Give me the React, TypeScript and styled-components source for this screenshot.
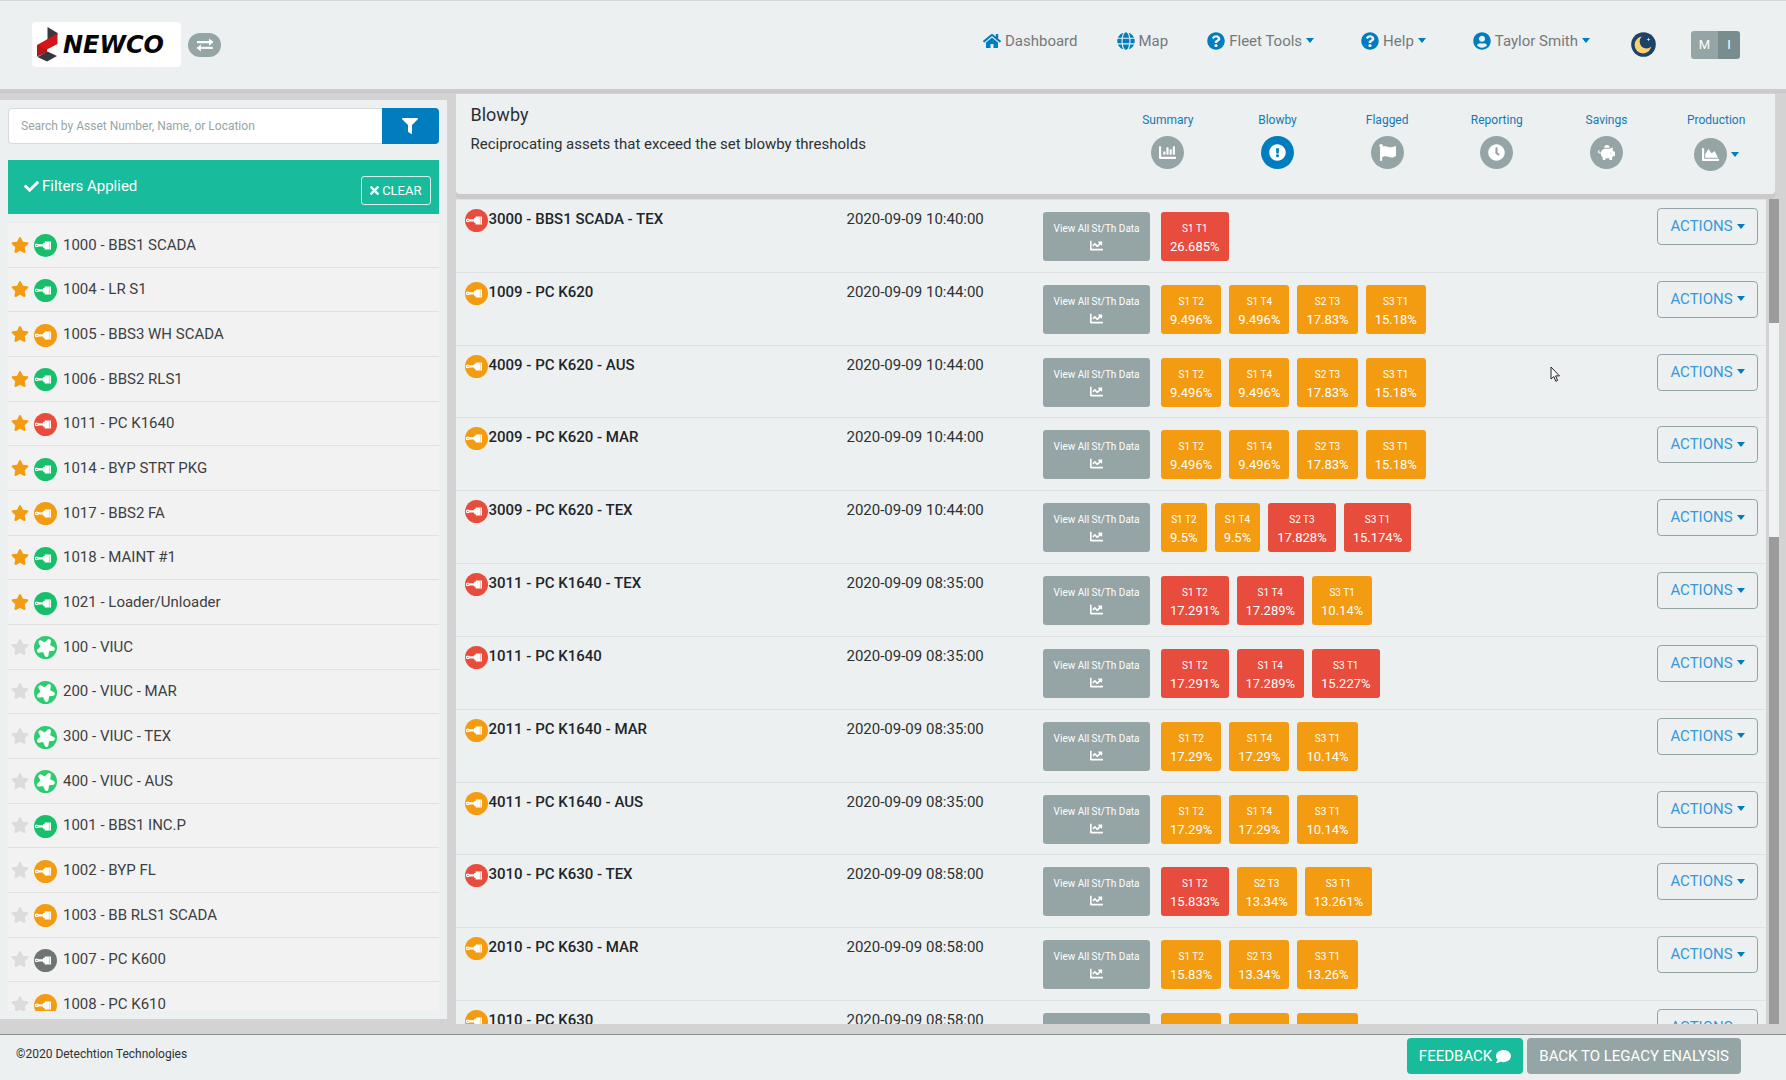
import React from "react";
import styled, { createGlobalStyle } from "styled-components";
import {
  FaHome, FaGlobe, FaQuestionCircle, FaUserCircle, FaFilter, FaCheck, FaTimes, FaStar,
  FaChartBar, FaExclamationCircle, FaFlag, FaClock, FaPiggyBank, FaChartArea, FaChartLine,
  FaComment,
} from "react-icons/fa";

const color = {
  surface: "#ecf0f1",
  gutter: "#d3d3d3",
  shade: "#cbc9ca",
  blue: "#007dbf",
  grey: "#95a5a6",
  teal: "#18bc9c",
  green: "#18bf6b",
  orange: "#f39c12",
  red: "#e74c3c",
  offline: "#6f7475",
};

const GlobalStyle = createGlobalStyle`
  *, *::before, *::after { box-sizing: border-box; }
  body {
    margin: 0;
    background: ${color.gutter};
    color: #2c3033;
    font-family: Roboto, "Liberation Sans", sans-serif;
    font-size: 15px;
    line-height: 20px;
  }
  button, input { font: inherit; }
  button { cursor: pointer; }
  a { text-decoration: none; color: inherit; }
`;

const Page = styled.div`
  position: relative;
  display: flex;
  flex-direction: column;
  height: 100vh;
  overflow: hidden;
`;

const TopBar = styled.header`
  display: flex;
  align-items: center;
  height: 89px;
  flex: none;
  padding: 0 46px 1px 32px;
  border-top: 1px solid #d5d9da;
  background: ${color.surface};
  box-shadow: 0 4px 1px ${color.shade};
`;

const Brand = styled.a`
  display: flex;
  align-items: center;
  gap: 5px;
  width: 149px;
  height: 45px;
  padding-left: 5px;
  border-radius: 4px;
  background: #fff;
  color: #050505;
  font: italic bold 24px "DejaVu Sans", sans-serif;
  svg { flex: none; }
`;

const SwapButton = styled.button`
  display: flex;
  align-items: center;
  justify-content: center;
  width: 33px;
  height: 24px;
  margin-left: 7px;
  padding: 0;
  border: 0;
  border-radius: 12px;
  background: ${color.grey};
  color: #fff;
`;

const Nav = styled.nav`
  display: flex;
  align-items: center;
  gap: 47px;
  height: 28px;
  margin: 0 41px 8px auto;
`;

const NavLink = styled.a<{ $trim?: boolean }>`
  display: flex;
  align-items: center;
  gap: 4px;
  margin-right: ${(p) => (p.$trim ? "-8px" : "0")};
  color: #76797b;
  svg { color: ${color.blue}; font-size: 18px; }
`;

const Caret = styled.span`
  width: 0;
  height: 0;
  border-top: 5px solid ${color.blue};
  border-left: 4px solid transparent;
  border-right: 4px solid transparent;
`;

const NightButton = styled.button`
  display: flex;
  padding: 0;
  border: 0;
  background: none;
`;

const UnitToggle = styled.div`
  display: flex;
  margin-left: 35px;
  border-radius: 3px;
  overflow: hidden;
`;

const UnitButton = styled.button<{ $active?: boolean }>`
  width: ${(p) => (p.$active ? "22px" : "27px")};
  height: 28px;
  padding: 0;
  border: 0;
  background: ${(p) => (p.$active ? "#798d8f" : color.grey)};
  color: #fff;
  font-size: 13px;
`;

const Body = styled.div`
  display: flex;
  flex: 1;
  min-height: 0;
  gap: 9px;
  padding: 5px 0 10px;
`;

const Sidebar = styled.aside`
  display: flex;
  flex-direction: column;
  width: 25%;
  min-width: 320px;
  margin: 6px 0 5px;
  padding: 8px 8px 8px 8px;
  background: ${color.surface};
`;

const SearchRow = styled.form`
  display: flex;
  height: 36px;
  margin-bottom: 16px;
  flex: none;
`;

const SearchInput = styled.input`
  flex: 1;
  min-width: 0;
  padding: 0 12px;
  border: 1px solid #d5dadd;
  border-right: 0;
  border-radius: 4px 0 0 4px;
  background: #fff;
  font-size: 12px;
  &::placeholder { color: #95a5a6; opacity: 1; }
`;

const FilterButton = styled.button`
  display: flex;
  align-items: center;
  justify-content: center;
  width: 57px;
  padding: 0;
  border: 0;
  border-radius: 0 4px 4px 0;
  background: ${color.blue};
  color: #fff;
  font-size: 16px;
`;

const FilterBanner = styled.div`
  display: flex;
  justify-content: space-between;
  align-items: flex-start;
  flex: none;
  height: 54px;
  margin-bottom: 8px;
  padding: 16px 8px 0 16px;
  background: ${color.teal};
  color: #fff;
`;

const BannerLabel = styled.span`
  display: flex;
  align-items: center;
  gap: 3px;
`;

const ClearButton = styled.button`
  display: flex;
  align-items: center;
  gap: 3px;
  height: 29px;
  padding: 0 8px;
  border: 1px solid #d9efe9;
  border-radius: 3px;
  background: none;
  color: #fff;
  font-size: 13px;
  svg { width: 9px; height: 13px; }
`;

const ListViewport = styled.div`
  flex: 1;
  min-height: 0;
  overflow: hidden;
`;

const AssetList = styled.ul`
  display: grid;
  grid-auto-rows: 1fr;
  height: 805px;
  margin: 0;
  padding: 0;
  border-top: 1px solid #e8eaeb;
  list-style: none;
  background: #f2f2f2;
`;

const AssetItem = styled.li`
  display: flex;
  align-items: center;
  padding: 0 3px;
  border-bottom: 1px solid #e2e2e2;
  color: #3d4042;
`;

const StarButton = styled.button<{ $on: boolean }>`
  display: flex;
  padding: 0;
  margin-right: 5px;
  border: 0;
  background: none;
  color: ${(p) => (p.$on ? color.orange : "#dcdcdc")};
  font-size: 18px;
`;

const AssetLink = styled.a`
  display: flex;
  align-items: center;
  gap: 6px;
  svg { flex: none; margin-top: 2px; }
`;

const Main = styled.main`
  display: flex;
  flex-direction: column;
  flex: 1;
  min-width: 0;
  margin-right: 7px;
`;

const PanelHead = styled.section`
  display: flex;
  justify-content: space-between;
  flex: none;
  height: 100px;
  margin-right: 4px;
  padding: 0 4px 0 15px;
  border-radius: 0 0 4px 4px;
  background: ${color.surface};
  box-shadow: 0 5px 0 ${color.shade};
`;

const PanelTitle = styled.h1`
  margin: 11px 0 9px;
  font-size: 18px;
  font-weight: 400;
`;

const PanelText = styled.p`
  margin: 0;
`;

const Tabs = styled.nav`
  display: grid;
  grid-template-columns: repeat(6, 1fr);
  width: 658px;
  flex: none;
`;

const Tab = styled.a`
  display: flex;
  flex-direction: column;
  align-items: center;
  gap: 6px;
  padding-top: 16px;
  color: #1678b4;
  font-size: 12px;
`;

const TabIcon = styled.span<{ $active?: boolean }>`
  display: flex;
  align-items: center;
  justify-content: center;
  width: 33px;
  height: 33px;
  border-radius: 50%;
  background: ${(p) => (p.$active ? color.blue : color.grey)};
  color: #fff;
  font-size: 17px;
`;

const TabIconRow = styled.span`
  display: flex;
  align-items: center;
  gap: 4px;
  margin-top: 2px;
`;

const ListArea = styled.section`
  display: flex;
  flex: 1;
  min-height: 0;
  margin-top: 5px;
  gap: 3px;
`;

const TableViewport = styled.div`
  flex: 1;
  min-width: 0;
  overflow: hidden;
  background: ${color.surface};
`;

const Table = styled.table`
  width: 100%;
  height: 875px;
  table-layout: fixed;
  border-collapse: separate;
  border-spacing: 0;
  border-top: 1px solid #dee2e4;
`;

const Col = styled.col<{ $width?: string }>`
  width: ${(p) => p.$width ?? "auto"};
`;

const Cell = styled.td<{ $top: number; $left?: number }>`
  padding: ${(p) => p.$top}px 0 0 ${(p) => p.$left ?? 0}px;
  border-bottom: 1px solid #dee2e4;
  vertical-align: top;
`;

const AssetName = styled.a`
  display: flex;
  align-items: flex-start;
  gap: 1px;
  color: #212529;
  font-weight: 500;
`;

const Readings = styled.div`
  display: flex;
  gap: 8px;
`;

const DataButton = styled.button`
  display: flex;
  flex-direction: column;
  align-items: center;
  width: 107px;
  height: 49px;
  margin-right: 3px;
  padding: 8px 0 0;
  border: 0;
  border-radius: 3px;
  background: ${color.grey};
  color: #fff;
  font-size: 10px;
  line-height: 18px;
  svg { margin-top: 1px; font-size: 13px; }
`;

const Reading = styled.button<{ $alert: boolean }>`
  display: flex;
  flex-direction: column;
  align-items: center;
  height: 49px;
  padding: 8px 9px 0;
  border: 0;
  border-radius: 3px;
  background: ${(p) => (p.$alert ? color.red : color.orange)};
  color: #fff;
  font-size: 13px;
  line-height: 18px;
  small { font-size: 10px; }
`;

const ActionsButton = styled.button`
  display: flex;
  align-items: center;
  justify-content: center;
  gap: 4px;
  width: 101px;
  height: 37px;
  padding: 0 0 1px;
  border: 1px solid ${color.grey};
  border-radius: 4px;
  background: none;
  color: #3498db;
`;

const ScrollTrack = styled.div`
  width: 10px;
  flex: none;
  padding-top: 124px;
  background: #9b9b9b;
`;

const ScrollThumb = styled.div`
  height: 214px;
  background: #eef2f3;
`;

const Footer = styled.footer`
  display: flex;
  align-items: flex-start;
  gap: 4px;
  flex: none;
  height: 46px;
  padding: 3px 45px 0 16px;
  border-top: 1px solid #8c9091;
  background: ${color.surface};
`;

const Copyright = styled.span`
  margin: 6px auto 0 0;
  font-size: 12px;
`;

const FooterButton = styled.button<{ $tone: string }>`
  display: flex;
  align-items: center;
  gap: 4px;
  height: 36px;
  padding: 0 12px;
  border: 0;
  border-radius: 4px;
  background: ${(p) => p.$tone};
  color: #fff;
`;

const Pointer = styled.svg`
  position: absolute;
  left: 1550px;
  top: 366px;
  pointer-events: none;
`;

type Tone = "green" | "orange" | "red" | "offline";

const PistonIcon = ({ tone }: { tone: Tone }) => (
  <svg width="23" height="23" viewBox="0 0 23 23" aria-hidden="true">
    <circle cx="11.5" cy="11.5" r="11.5" fill={color[tone]} />
    <path d="M1 10.2H9V9H10.6V7.6H17V15.4H10.6V13.8H9V12.6H1Z" fill="#fff" />
    <circle cx="2.8" cy="11.4" r="1.8" fill="#fff" />
    <circle cx="2.8" cy="11.4" r="0.7" fill={color[tone]} />
    <path d="M15.4 7.6V15.4" stroke={color[tone]} strokeWidth="0.4" />
  </svg>
);

const RotorIcon = () => (
  <svg width="23" height="23" viewBox="0 0 23 23" aria-hidden="true">
    <circle cx="11.5" cy="11.5" r="11.5" fill="#2ecc71" />
    <g fill="#fff" transform="rotate(172 11.5 11.5)">
      {[0, 72, 144, 216, 288].map((angle) => (
        <path key={angle} d="M7.2 11.5L9.8 3Q11.5 1 13.2 3L15.8 11.5Z" transform={`rotate(${angle} 11.5 11.5)`} />
      ))}
    </g>
  </svg>
);

const LogoMark = () => (
  <svg width="21" height="35" viewBox="0 0 21 35" aria-hidden="true">
    <path d="M10.5 0L20.5 6V8L10.5 13.5Z" fill="#3a3a41" />
    <path d="M0 18L20.5 6.5V17L10 22.5V25L0 29.5Z" fill="#d4161c" />
    <path d="M0 18L10 22.5V25L0 29.5Z" fill="#b5161c" />
    <path d="M0.5 30L10.5 24.5L20 29L10 34.5Z" fill="#35353b" />
  </svg>
);

const SwapIcon = () => (
  <svg width="18" height="14" viewBox="0 0 18 14" aria-hidden="true">
    <path d="M1 3H13V0.4L17.6 4.1L13 7.8V5.3H1Z" fill="#fff" />
    <path d="M17 8.8H5V6.3L0.4 10L5 13.7V11.1H17Z" fill="#fff" stroke={color.grey} strokeWidth="0.3" />
  </svg>
);

const MoonIcon = () => (
  <svg width="25" height="25" viewBox="0 0 25 25" aria-hidden="true">
    <circle cx="12.5" cy="12.5" r="12.3" fill="#1d4468" />
    <circle cx="12" cy="13" r="8.4" fill="#ffd071" />
    <circle cx="15.4" cy="9.6" r="6.8" fill="#1d4468" />
    <path d="M17.5 5.5L18 7L19.5 7.5L18 8L17.5 9.5L17 8L15.5 7.5L17 7Z" fill="#e8edf0" />
  </svg>
);

const assets: [string, Tone | "rotor", boolean][] = [
  ["1000 - BBS1 SCADA", "green", true],
  ["1004 - LR S1", "green", true],
  ["1005 - BBS3 WH SCADA", "orange", true],
  ["1006 - BBS2 RLS1", "green", true],
  ["1011 - PC K1640", "red", true],
  ["1014 - BYP STRT PKG", "green", true],
  ["1017 - BBS2 FA", "orange", true],
  ["1018 - MAINT #1", "green", true],
  ["1021 - Loader/Unloader", "green", true],
  ["100 - VIUC", "rotor", false],
  ["200 - VIUC - MAR", "rotor", false],
  ["300 - VIUC - TEX", "rotor", false],
  ["400 - VIUC - AUS", "rotor", false],
  ["1001 - BBS1 INC.P", "green", false],
  ["1002 - BYP FL", "orange", false],
  ["1003 - BB RLS1 SCADA", "orange", false],
  ["1007 - PC K600", "offline", false],
  ["1008 - PC K610", "orange", false],
];

type ReadingData = [label: string, value: string, alert?: boolean];
interface BlowbyRow {
  name: string;
  tone: Tone;
  time: string;
  readings: ReadingData[];
}

const k620: ReadingData[] = [["S1 T2", "9.496%"], ["S1 T4", "9.496%"], ["S2 T3", "17.83%"], ["S3 T1", "15.18%"]];
const k1640: ReadingData[] = [["S1 T2", "17.29%"], ["S1 T4", "17.29%"], ["S3 T1", "10.14%"]];
const k630: ReadingData[] = [["S1 T2", "15.83%"], ["S2 T3", "13.34%"], ["S3 T1", "13.26%"]];

const rows: BlowbyRow[] = [
  { name: "3000 - BBS1 SCADA - TEX", tone: "red", time: "10:40:00", readings: [["S1 T1", "26.685%", true]] },
  { name: "1009 - PC K620", tone: "orange", time: "10:44:00", readings: k620 },
  { name: "4009 - PC K620 - AUS", tone: "orange", time: "10:44:00", readings: k620 },
  { name: "2009 - PC K620 - MAR", tone: "orange", time: "10:44:00", readings: k620 },
  {
    name: "3009 - PC K620 - TEX", tone: "red", time: "10:44:00",
    readings: [["S1 T2", "9.5%"], ["S1 T4", "9.5%"], ["S2 T3", "17.828%", true], ["S3 T1", "15.174%", true]],
  },
  {
    name: "3011 - PC K1640 - TEX", tone: "red", time: "08:35:00",
    readings: [["S1 T2", "17.291%", true], ["S1 T4", "17.289%", true], ["S3 T1", "10.14%"]],
  },
  {
    name: "1011 - PC K1640", tone: "red", time: "08:35:00",
    readings: [["S1 T2", "17.291%", true], ["S1 T4", "17.289%", true], ["S3 T1", "15.227%", true]],
  },
  { name: "2011 - PC K1640 - MAR", tone: "orange", time: "08:35:00", readings: k1640 },
  { name: "4011 - PC K1640 - AUS", tone: "orange", time: "08:35:00", readings: k1640 },
  {
    name: "3010 - PC K630 - TEX", tone: "red", time: "08:58:00",
    readings: [["S1 T2", "15.833%", true], ["S2 T3", "13.34%"], ["S3 T1", "13.261%"]],
  },
  { name: "2010 - PC K630 - MAR", tone: "orange", time: "08:58:00", readings: k630 },
  { name: "1010 - PC K630", tone: "orange", time: "08:58:00", readings: k630 },
];

export default function App() {
  return (
    <Page>
      <GlobalStyle />
      <TopBar>
        <Brand href="#home"><LogoMark />NEWCO</Brand>
        <SwapButton aria-label="Switch company"><SwapIcon /></SwapButton>
        <Nav>
          <NavLink href="#dashboard" $trim><FaHome />Dashboard</NavLink>
          <NavLink href="#map" $trim><FaGlobe />Map</NavLink>
          <NavLink href="#fleet"><FaQuestionCircle />Fleet Tools<Caret /></NavLink>
          <NavLink href="#help"><FaQuestionCircle />Help<Caret /></NavLink>
          <NavLink href="#account"><FaUserCircle />Taylor Smith<Caret /></NavLink>
        </Nav>
        <NightButton aria-label="Night mode"><MoonIcon /></NightButton>
        <UnitToggle>
          <UnitButton>M</UnitButton>
          <UnitButton $active>I</UnitButton>
        </UnitToggle>
      </TopBar>

      <Body>
        <Sidebar>
          <SearchRow>
            <SearchInput aria-label="Search assets" placeholder="Search by Asset Number, Name, or Location" />
            <FilterButton type="button" aria-label="Filter"><FaFilter /></FilterButton>
          </SearchRow>
          <FilterBanner>
            <BannerLabel><FaCheck />Filters Applied</BannerLabel>
            <ClearButton><FaTimes />CLEAR</ClearButton>
          </FilterBanner>
          <ListViewport>
            <AssetList>
              {assets.map(([name, icon, starred]) => (
                <AssetItem key={name}>
                  <StarButton $on={starred} aria-label="Favorite"><FaStar /></StarButton>
                  <AssetLink href="#asset">
                    {icon === "rotor" ? <RotorIcon /> : <PistonIcon tone={icon} />}
                    {name}
                  </AssetLink>
                </AssetItem>
              ))}
            </AssetList>
          </ListViewport>
        </Sidebar>

        <Main>
          <PanelHead>
            <div>
              <PanelTitle>Blowby</PanelTitle>
              <PanelText>Reciprocating assets that exceed the set blowby thresholds</PanelText>
            </div>
            <Tabs>
              <Tab href="#summary">Summary<TabIcon><FaChartBar /></TabIcon></Tab>
              <Tab href="#blowby">Blowby<TabIcon $active><FaExclamationCircle /></TabIcon></Tab>
              <Tab href="#flagged">Flagged<TabIcon><FaFlag /></TabIcon></Tab>
              <Tab href="#reporting">Reporting<TabIcon><FaClock /></TabIcon></Tab>
              <Tab href="#savings">Savings<TabIcon><FaPiggyBank /></TabIcon></Tab>
              <Tab href="#production">
                Production
                <TabIconRow><TabIcon><FaChartArea /></TabIcon><Caret /></TabIconRow>
              </Tab>
            </Tabs>
          </PanelHead>
          <ListArea>
            <TableViewport>
              <Table>
                <colgroup>
                  <Col $width="391px" />
                  <Col $width="15%" />
                  <Col />
                  <Col $width="109px" />
                </colgroup>
                <tbody>
                  {rows.map((row) => (
                    <tr key={row.name}>
                      <Cell $top={9} $left={9}>
                        <AssetName href="#asset"><PistonIcon tone={row.tone} />{row.name}</AssetName>
                      </Cell>
                      <Cell $top={9}>2020-09-09 {row.time}</Cell>
                      <Cell $top={12}>
                        <Readings>
                          <DataButton>View All St/Th Data<FaChartLine /></DataButton>
                          {row.readings.map(([label, value, alert]) => (
                            <Reading key={label} $alert={Boolean(alert)}>
                              <small>{label}</small>
                              {value}
                            </Reading>
                          ))}
                        </Readings>
                      </Cell>
                      <Cell $top={8}>
                        <ActionsButton>ACTIONS<Caret /></ActionsButton>
                      </Cell>
                    </tr>
                  ))}
                </tbody>
              </Table>
            </TableViewport>
            <ScrollTrack><ScrollThumb /></ScrollTrack>
          </ListArea>
        </Main>
      </Body>

      <Footer>
        <Copyright>©2020 Detechtion Technologies</Copyright>
        <FooterButton $tone={color.teal}>FEEDBACK<FaComment /></FooterButton>
        <FooterButton $tone={color.grey}>BACK TO LEGACY ENALYSIS</FooterButton>
      </Footer>

      <Pointer width="11" height="17" viewBox="0 0 11 17" aria-hidden="true">
        <path d="M1 1V13L3.8 10.5L5.8 15.3L7.6 14.5L5.6 9.9H9.4Z" fill="#fff" stroke="#222" strokeWidth="1" />
      </Pointer>
    </Page>
  );
}
